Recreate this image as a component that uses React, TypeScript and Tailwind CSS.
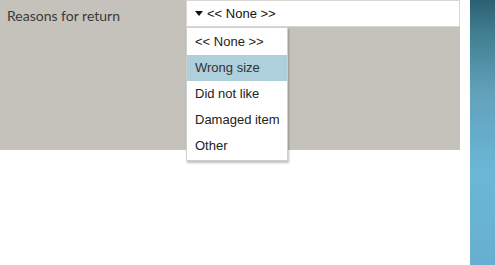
import React from "react";

export default function App() {
  const items = ["<< None >>", "Wrong size", "Did not like", "Damaged item", "Other"];
  return (
    <div className="relative w-[495px] h-[265px] bg-white overflow-hidden">
      <div className="flex h-[265px]">
        <div className="w-[460px] h-[150px] bg-[#c5c2bb] flex items-start">
          <div
            className="w-[186px] pl-[7px] pt-[5px] text-[14px] text-[#3a3a3a]"
            style={{ fontFamily: 'Lato, sans-serif' }}
          >
            Reasons for return
          </div>
          <div className="relative">
            <div
              className="w-[274px] h-[27px] bg-white border border-[#d8d6d2] flex items-center pl-[8px] text-[13px] text-[#111]"
              style={{ fontFamily: '"Liberation Sans", Arial, sans-serif' }}
            >
              <svg width="8" height="5" viewBox="0 0 8 5" className="mr-[4px]">
                <path d="M0 0 L8 0 L4 5 Z" fill="#111" />
              </svg>
              <span>&lt;&lt; None &gt;&gt;</span>
            </div>
            <div
              className="absolute left-0 top-[27px] w-[102px] bg-white border border-[#cfcfcf] shadow-[1px_2px_2px_rgba(0,0,0,0.25)] py-[1px] text-[13px] text-[#222]"
              style={{ fontFamily: '"Liberation Sans", Arial, sans-serif' }}
            >
              {items.map((it, i) => (
                <div
                  key={it}
                  className={
                    "h-[26px] flex items-center pl-[8px] " +
                    (i === 1 ? "bg-[#aecfdc] text-[#333]" : "")
                  }
                >
                  {it}
                </div>
              ))}
            </div>
          </div>
        </div>
        <div className="w-[10px]" />
        <div className="w-[25px] h-[265px] bg-[linear-gradient(to_bottom,#2a6072_0%,#3f7d8f_12%,#62a1ba_35%,#6bb7d8_65%,#67afd0_100%)]" />
      </div>
    </div>
  );
}
